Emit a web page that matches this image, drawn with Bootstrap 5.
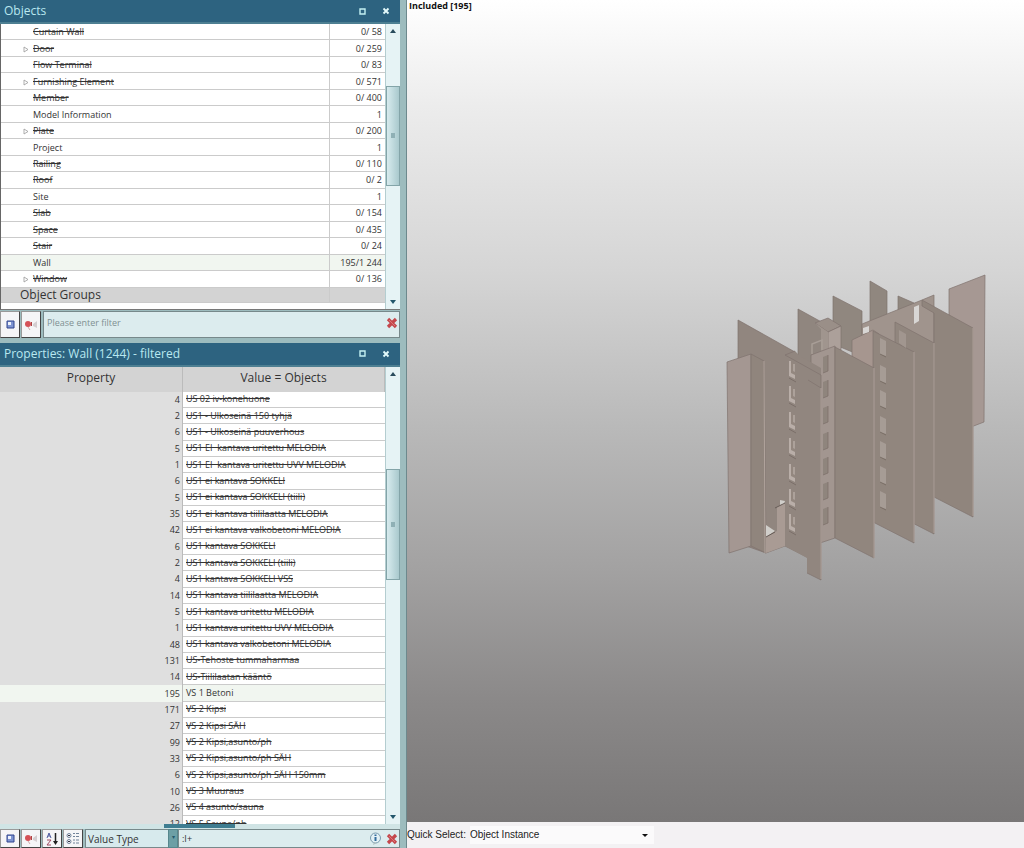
<!DOCTYPE html>
<html lang="en">
<head>
<meta charset="utf-8">
<meta name="viewport" content="width=device-width, initial-scale=1">
<title>Objects and Properties</title>
<link href="https://cdn.jsdelivr.net/npm/bootstrap@5.3.0/dist/css/bootstrap.min.css" rel="stylesheet">
<style>
body{font-family:"Open Sans","Noto Sans",sans-serif;font-size:9px;line-height:14px;color:#333;background:#a3bfc1}
.shell{height:100vh;min-height:500px}
.side{flex:0 0 407px;background:#9dbcbe;border-right:1px solid #6d898d;padding-right:6px}
.title-bar{background:#2d6380;color:#b9e8f0;height:24px;padding:0 10px 0 4px;font-size:12px;border-bottom:2px solid #4d7f92}
.title-bar h2{font-size:12px;line-height:20px;margin:0;font-weight:400}
.title-bar button,.tool-btn,.clear-btn{border:0;background:none;padding:0;line-height:0}
.pane{background:#fff}
.obj-pane{height:286px;border-left:1px solid #666;border-bottom:1px solid #777}
.grid-table{width:100%;table-layout:fixed;border-collapse:separate;border-spacing:0}
.grid-table td{padding:0;border-bottom:1px solid #cbcbcb;white-space:pre;overflow:hidden;vertical-align:middle}
.obj-table{height:279px}
.obj-table td{padding-top:1px}
.obj-table .num{width:56px;border-left:1px solid #cbcbcb;text-align:right;padding-right:3px}
.name{padding-left:20px!important}
.name svg{margin-right:4px}
.no-arrow{padding-left:32px!important}
.off{text-decoration:line-through}
.picked td{background:#f1f6f0}
.group td{background:#d3d3d3;font-size:12px;line-height:14px;padding:0 0 0 19px}
.scroll-rail{flex:0 0 15px;background:#e6f3f5;border-left:1px solid #b4cdd0;padding:4px 0;line-height:0}
.scroll-thumb{width:100%;border:1px solid #83a4a8;background:linear-gradient(90deg,#d7ebee,#a9c9cd)}
.thumb-1{flex:0 0 100px}.thumb-2{flex:0 0 111px}
.gap-1a{flex:50 1 0}.gap-1b{flex:109 1 0}
.gap-2a{flex:90 1 0}.gap-2b{flex:227 1 0}
.grip{width:4px;height:5px;background:#8fb0b5}
.filter-row{height:27px;margin-top:1px}
.tool-btn{width:20px;background:#f5f5f7;border:1px solid #999;border-right-color:#444;border-bottom-color:#444}
.tool-btn + .tool-btn{margin-left:1px}
.text-box{background:#dcecee;border:1px solid #77898b;margin-left:2px}
.text-box input{border:0;background:none;padding:0 3px;font-size:9px;line-height:14px;color:#333;outline:0;min-width:0}
.text-box input::placeholder{color:#7f9092;opacity:1}
.props{margin-top:5px;min-height:0}
.prop-pane{min-height:0;background:#dfdfdf}
.prop-scroll{min-width:0;overflow:hidden}
.prop-table{height:466px}
.prop-table th{height:25px;background:#d3d3d3;font-size:12px;line-height:14px;font-weight:400;text-align:center;padding:0 0 2px;border-right:1px solid #bbb}
.prop-table .num{text-align:right;background:#dfdfdf;border-bottom:0;border-right:1px solid #bbb;padding-right:2px}
.prop-table td.val{background:#fff;padding-left:3px}
.prop-table .picked td{background:#f1f6f0!important}
.h-rail{height:6px;background:#d0e4e5;padding-left:164px}
.h-thumb{width:71px;height:4px;background:#3f7d91}
.prop-tools{height:19px}
.type-select{width:93px;margin-left:2px;border:1px solid #77898b;background:#d7eaed;border-radius:0;appearance:none;font-size:10px;line-height:16px;padding:0 2px;color:#333}
.select-wrap{position:relative}
.select-wrap span{position:absolute;right:0;top:0;bottom:0;width:10px;background:#6d9fa5;border:1px solid #56878d;pointer-events:none;color:#24586c;line-height:14px;font-size:6px;text-align:center}
.view{min-width:0;background:#777}
.scene{background:linear-gradient(#fff 0,#ececec 13%,#d5d5d5 33%,#b9b9b9 52%,#a3a2a2 69%,#8b8989 85%,#797777 100%);min-height:0}
.scene h1{font-size:9px;line-height:12px;font-weight:700;margin:0;color:#111;padding:0 2px;position:absolute}
.scene svg{width:100%;height:100%;min-height:0}
.quick{height:26px;background:#f3f1f3;font-family:"Liberation Sans",sans-serif;font-size:10px;color:#222}
.quick select{width:184px;border:0;background:#fbfafb;appearance:none;font-size:10px;height:18px;padding:0;color:#222}
.quick svg{margin-left:-12px}
</style>
</head>
<body>
<main class="shell d-flex">
<aside class="side d-flex flex-column">
  <section>
    <div class="title-bar d-flex align-items-center"><h2 class="flex-grow-1">Objects</h2>
      <button type="button" aria-label="Maximize" class="me-3"><svg width="7" height="7"><path d="M1 1h5v5H1z" fill="none" stroke="#c3f1f2" stroke-width="1.4"/></svg></button>
      <button type="button" aria-label="Close"><svg width="8" height="8"><path d="M1.5 1.5l5 5M6.5 1.5l-5 5" stroke="#e4fbfc" stroke-width="1.8"/></svg></button>
    </div>
    <div class="pane obj-pane d-flex">
      <div class="flex-grow-1"><table class="grid-table obj-table"><tbody id="objects"></tbody></table></div>
      <div class="scroll-rail d-flex flex-column align-items-center">
        <svg width="8" height="6"><path d="M1 5l3-4 3 4z" fill="#294b5c"/></svg><div class="gap-1a"></div>
        <div class="scroll-thumb thumb-1 d-flex align-items-center justify-content-center"><span class="grip"></span></div>
        <div class="gap-1b"></div><svg width="8" height="6"><path d="M1 1l3 4 3-4z" fill="#23566b"/></svg>
      </div>
    </div>
    <div class="filter-row d-flex">
      <button type="button" class="tool-btn" aria-label="Save"><svg width="9" height="9"><use href="#save"/></svg></button>
      <button type="button" class="tool-btn" aria-label="Hide"><svg width="14" height="12"><use href="#hide"/></svg></button>
      <div class="text-box flex-grow-1 d-flex align-items-center pb-1">
        <input class="flex-grow-1" type="text" aria-label="Filter" placeholder="Please enter filter">
        <button type="button" class="clear-btn" aria-label="Clear"><svg width="13" height="12"><use href="#clear"/></svg></button>
      </div>
    </div>
  </section>
  <section class="props d-flex flex-column flex-grow-1">
    <div class="title-bar d-flex align-items-center"><h2 class="flex-grow-1">Properties: Wall (1244) - filtered</h2>
      <button type="button" aria-label="Maximize" class="me-3"><svg width="7" height="7"><path d="M1 1h5v5H1z" fill="none" stroke="#c3f1f2" stroke-width="1.4"/></svg></button>
      <button type="button" aria-label="Close"><svg width="8" height="8"><path d="M1.5 1.5l5 5M6.5 1.5l-5 5" stroke="#e4fbfc" stroke-width="1.8"/></svg></button>
    </div>
    <div class="prop-pane d-flex flex-grow-1">
      <div class="prop-scroll flex-grow-1"><table class="grid-table prop-table">
        <colgroup><col style="width:183px"><col></colgroup>
        <thead><tr><th>Property</th><th>Value = Objects</th></tr></thead><tbody id="props"></tbody></table></div>
      <div class="scroll-rail d-flex flex-column align-items-center">
        <svg width="8" height="6"><path d="M1 5l3-4 3 4z" fill="#294b5c"/></svg><div class="gap-2a"></div>
        <div class="scroll-thumb thumb-2 d-flex align-items-center justify-content-center"><span class="grip"></span></div>
        <div class="gap-2b"></div><svg width="8" height="6"><path d="M1 1l3 4 3-4z" fill="#23566b"/></svg>
      </div>
    </div>
    <div class="h-rail"><div class="h-thumb"></div></div>
    <div class="prop-tools d-flex">
      <button type="button" class="tool-btn" aria-label="Save"><svg width="9" height="9"><use href="#save"/></svg></button>
      <button type="button" class="tool-btn" aria-label="Hide"><svg width="14" height="12"><use href="#hide"/></svg></button>
      <button type="button" class="tool-btn" aria-label="Sort"><svg width="13" height="14" fill="none"><path d="M1 6l2-5 2 5M2 4h2" stroke="#4a579d"/><path d="M1 8h4l-4 5h4" stroke="#a04860"/><path d="M9.5 1v10" stroke="#222" stroke-width="1.5"/><path d="M7 9h5l-2.5 4z" fill="#222"/></svg></button>
      <button type="button" class="tool-btn" aria-label="Group"><svg width="14" height="13" fill="none" stroke="#71839a"><circle cx="3" cy="3.500" r="2"/><circle cx="3" cy="9.500" r="2"/><path d="M2 3.500h2M2 9.500h2" stroke="#334"/><path d="M7 1.500h2m1 0h3M7 4.500h2m1 0h3M7 8h2m1 0h3M7 11h2m1 0h3"/></svg></button>
      <div class="select-wrap d-flex"><select class="type-select" aria-label="Value type"><option>Value Type</option></select><span>▾</span></div>
      <div class="text-box flex-grow-1 d-flex align-items-center ms-0">
        <input class="flex-grow-1" type="text" aria-label="Property filter" value=":I+">
        <button type="button" class="clear-btn me-1" aria-label="Information"><svg width="13" height="13"><circle cx="6.500" cy="6" r="5" fill="#e3f1f5" stroke="#7a9caf"/><path d="M5 10l-1 3 4-2" fill="#aebfc2"/><path d="M6.500 2.500v1.500M6.500 5v4" stroke="#326d9e" stroke-width="2"/></svg></button>
        <button type="button" class="clear-btn" aria-label="Clear"><svg width="13" height="12"><use href="#clear"/></svg></button>
      </div>
    </div>
  </section>
</aside>
<section class="view d-flex flex-column flex-grow-1">
  <div class="scene flex-grow-1 d-flex">
    <h1>Included [195]</h1>
    <svg viewBox="407 0 617 822" role="img" aria-label="Building walls">
      <defs>
        <g id="w1"><path d="M0 0l6 3v15l-6-4z" fill="#93877f"/><path d="M0 0h2v12l4 2v4l-6-3z" fill="#b9aea8"/><path d="M4 3h2v8l-2-1z" fill="#aca19a"/><path d="M0 17l7 4" stroke="#7b6f69" fill="none"/></g>
        <g id="w2"><path d="M0 2l5-2v16l-5 2z" fill="#8f857d"/><path d="M0 18l5-2V0" stroke="#7b6f69" stroke-width=".7" fill="none"/></g>
        <g id="w3"><path d="M0 0l6 3v15l-6-2z" fill="#a69c95"/><path d="M0 16l6 3" stroke="#74685f" stroke-width=".8" fill="none"/></g>
      </defs>
      <g stroke="#80736e" stroke-width=".7" stroke-linejoin="round">
        <path d="M949 289l36-14-1 147-13 5-22-80z" fill="#a69893"/>
        <path d="M870 281l17 10v45l-17-8zM833 296l29 15v45l-29-12z" fill="#90877f"/>
        <path d="M898 296l16 7-2 15h-14z" fill="#90877f"/>
        <path d="M862 324l60-24 12-5v60h-72z" fill="#a0948d"/>
        <path d="M798 309l38 21v60h-38z" fill="#90867f"/>
        <path d="M815 323l13-5 13 8-13 6z" fill="#9a8f88"/>
        <path d="M828 332l13-6v24l-13 2z" fill="#aca09a"/>
        <path d="M815 323l13 9v18l-7 2v-23z" fill="#a0958e" stroke="none"/>
        <path d="M922 300l51 28v189l-39-20V313l-12-7z" fill="#90857d"/>
        <path d="M852 340l21-10 6 4v80l-27-20z" fill="#a6968f"/>
        <path d="M895 322l39 21v191l-39-20z" fill="#91867e"/>
        <path d="M873 331l41 21v191l-41-21z" fill="#91867e"/>
        <path d="M738 320l57 32 17 75-5 130-22-11-19 7-28-10z" fill="#91867f"/>
        <path d="M811 355l24-9v192l-24 8z" fill="#a29690"/>
        <path d="M835 347l39 21v190l-39-20z" fill="#91867e"/>
        <path d="M785 355l10-4 5 5 21 12v212l-14-7v-15l-22-12z" fill="#91867f" stroke="none"/>
        <path d="M785 355l36 20v13M807 573l14 7V388l-13-8M785 355l10-4" fill="none"/>
        <path d="M727 362l24-8v192l-22 7z" fill="#a49792"/>
        <path d="M751 354l13 7 2 192-15-7z" fill="#90857d"/>
      </g>
      <path d="M764 361l1 192M821 388v191M914 352v190M934 343v190M973 328v188M874 368v190" stroke="#b1a49d" fill="none"/>
      <path d="M766 537l11-6V507l8-5v44l-19 7z" fill="#a99b94"/>
      <path d="M766 525l9 6-9 6zM780 500l5 1-1 3-4 1z" fill="#d0ceca"/>
      <path d="M766 537l9-5M775 508l10-5" stroke="#675c57" fill="none"/>
      <path d="M914 307l5-2v16l-5 3zM863 328l6-2v6l-6 2z" fill="#d8d6d4"/>
      <path d="M899 330l7 4v14l-7-5z" fill="#a1968f"/>
      <path d="M812 354v-10l10-4v10" fill="none" stroke="#a89e97" stroke-width="1.5"/>
      <g id="windows"></g>
    </svg>
  </div>
  <div class="quick d-flex align-items-center"><label for="quick">Quick Select:</label><select id="quick" class="ms-1"><option>Object Instance</option></select><svg width="7" height="5"><path d="M0 1h6L3 4z" fill="#111"/></svg></div>
</section>
</main>
<svg width="0" height="0" class="position-absolute">
  <symbol id="save" viewBox="0 0 9 9"><path d="M1 1h7v7H1z" fill="#7f95d2" stroke="#30458e"/><path d="M2 2h3v3H2z" fill="#eef3fd"/></symbol>
  <symbol id="hide" viewBox="0 0 14 12"><circle cx="4" cy="5" r="3" fill="#d55258"/><path d="M4 8l2 3" stroke="#caa"/><path d="M9 5l4-3v7l-4-2z" fill="#d4ced1"/><path d="M7 3h1v4H7z" fill="#a44"/></symbol>
  <symbol id="clear" viewBox="0 0 13 12"><path d="M2 2l8 8M10 2l-8 8" stroke="#c4474c" stroke-width="3.2"/><path d="M3 3l6 6" stroke="#dc7779"/></symbol>
</svg>
<script>
const objects = [["Curtain Wall","0/ 58"],["Door","0/ 259",1],["Flow Terminal","0/ 83"],["Furnishing Element","0/ 571",1],["Member","0/ 400"],["Model Information","1"],["Plate","0/ 200",1],["Project","1"],["Railing","0/ 110"],["Roof","0/ 2"],["Site","1"],["Slab","0/ 154"],["Space","0/ 435"],["Stair","0/ 24"],["Wall","195/1 244"],["Window","0/ 136",1]];
const arrow = '<svg width="8" height="7"><path d="M3 1v5l4-2.5z" fill="none" stroke="#999" stroke-width=".8"/></svg>';
document.getElementById("objects").innerHTML = objects.map(([n,c,a]) =>
  `<tr class="${n==="Wall"?"picked":""}"><td class="${a?"name":"no-arrow"}">${a?arrow:""}<span class="${c.startsWith("0/")?"off":""}">${n}</span></td><td class="num">${c}</td></tr>`).join("")
  + '<tr class="group"><td>Object Groups</td><td class="num"></td></tr>';
const values = [[4,"US 02 iv-konehuone"],[2,"US1 - Ulkoseinä 150 tyhjä"],[6,"US1 - Ulkoseinä puuverhous"],[5,"US1 EI  kantava uritettu MELODIA"],[1,"US1 EI  kantava uritettu UVV MELODIA"],[6,"US1 ei kantava SOKKELI"],[5,"US1 ei kantava SOKKELI (tiili)"],[35,"US1 ei kantava tiililaatta MELODIA"],[42,"US1 ei kantava valkobetoni MELODIA"],[6,"US1 kantava SOKKELI"],[2,"US1 kantava SOKKELI (tiili)"],[4,"US1 kantava SOKKELI VSS"],[14,"US1 kantava tiililaatta MELODIA"],[5,"US1 kantava uritettu MELODIA"],[1,"US1 kantava uritettu UVV MELODIA"],[48,"US1 kantava valkobetoni MELODIA"],[131,"US-Tehoste tummaharmaa"],[14,"US-Tiililaatan kääntö"],[195,"VS 1 Betoni"],[171,"VS 2 Kipsi"],[27,"VS 2 Kipsi SÄH"],[99,"VS 2 Kipsi,asunto/ph"],[33,"VS 2 Kipsi,asunto/ph SÄH"],[6,"VS 2 Kipsi,asunto/ph SÄH 150mm"],[10,"VS 3 Muuraus"],[26,"VS 4 asunto/sauna"],[12,"VS 5 Sauna/ph"]];
document.getElementById("props").innerHTML = values.map(([c,n]) =>
  `<tr class="${c===195?"picked":""}"><td class="num">${c}</td><td class="val"><span class="${c===195?"":"off"}">${n}</span></td></tr>`).join("");
const columns = [["w1",789,[361,386,412,438,464,489,514]],["w2",823,[355,380,406,432,457,482,507]],["w3",880,[338,365,390,416,441,466,491]]];
document.getElementById("windows").innerHTML = columns.map(([id,x,ys]) => ys.map(y => `<use href="#${id}" x="${x}" y="${y}"/>`).join("")).join("");
</script>
<script src="https://cdn.jsdelivr.net/npm/bootstrap@5.3.0/dist/js/bootstrap.bundle.min.js"></script>
</body>
</html>
